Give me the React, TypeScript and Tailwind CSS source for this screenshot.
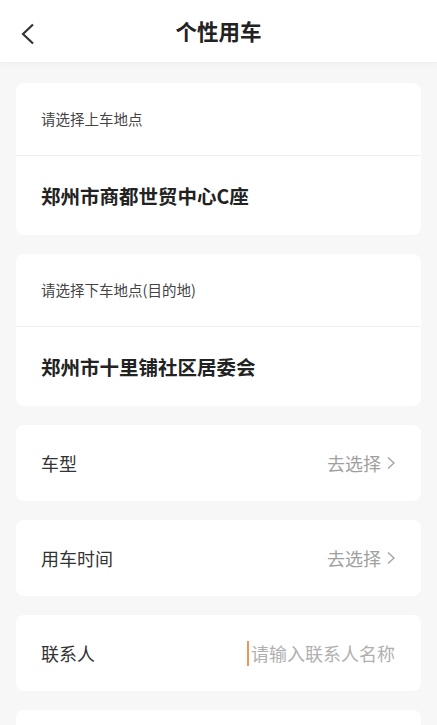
import React from "react";

const font = { fontFamily: '"Noto Sans CJK SC", "Noto Sans", sans-serif' };

function Chevron() {
  return (
    <svg width="10" height="14" viewBox="0 0 10 14" className="ml-[5px]">
      <polyline points="2,1.5 8,7 2,12.5" fill="none" stroke="#a0a0a0" strokeWidth="1.3" />
    </svg>
  );
}

function PlaceCard({ label, value }: { label: string; value: string }) {
  return (
    <div className="bg-white rounded-[8px] flex flex-col">
      <div className="h-[72px] flex items-center px-[25px] text-[14.5px] text-[#444]">{label}</div>
      <div className="h-px bg-[#efefef]" />
      <div className="h-[79px] flex items-center px-[25px] text-[19.5px] font-bold text-[#222]">{value}</div>
    </div>
  );
}

function SelectRow({ label }: { label: string }) {
  return (
    <div className="bg-white rounded-[8px] h-[76px] flex items-center justify-between pl-[25px] pr-[25px]">
      <span className="text-[18px] text-[#333]">{label}</span>
      <span className="flex items-center text-[18px] text-[#a0a0a0]">
        去选择
        <Chevron />
      </span>
    </div>
  );
}

export default function App() {
  return (
    <div style={font} className="w-[437px] h-[725px] bg-[#f7f7f7] overflow-hidden">
      <div className="h-[63px] bg-white flex items-center justify-center relative border-b border-[#f0f0f0] shadow-[0_2px_6px_rgba(0,0,0,0.03)]">
        <svg width="16" height="22" viewBox="0 0 16 22" className="absolute left-[20px] top-[23px]">
          <polyline points="13,1.5 3,11 13,20.5" fill="none" stroke="#333" strokeWidth="2.2" />
        </svg>
        <h1 className="text-[21.5px] font-bold text-[#222]">个性用车</h1>
      </div>

      <div className="flex flex-col gap-[19px] px-[16px] pt-[20px]">
        <PlaceCard label="请选择上车地点" value="郑州市商都世贸中心C座" />
        <PlaceCard label="请选择下车地点(目的地)" value="郑州市十里铺社区居委会" />
        <SelectRow label="车型" />
        <SelectRow label="用车时间" />
        <div className="bg-white rounded-[8px] h-[76px] flex items-center justify-between pl-[25px] pr-[26px]">
          <span className="text-[18px] text-[#333]">联系人</span>
          <span className="flex items-center text-[18px] text-[#b0b0b0]">
            <span className="w-[2px] h-[25px] bg-[#e9965a] mr-[2px]" />
            请输入联系人名称
          </span>
        </div>
        <div className="bg-white rounded-[8px] h-[76px]" />
      </div>
    </div>
  );
}
